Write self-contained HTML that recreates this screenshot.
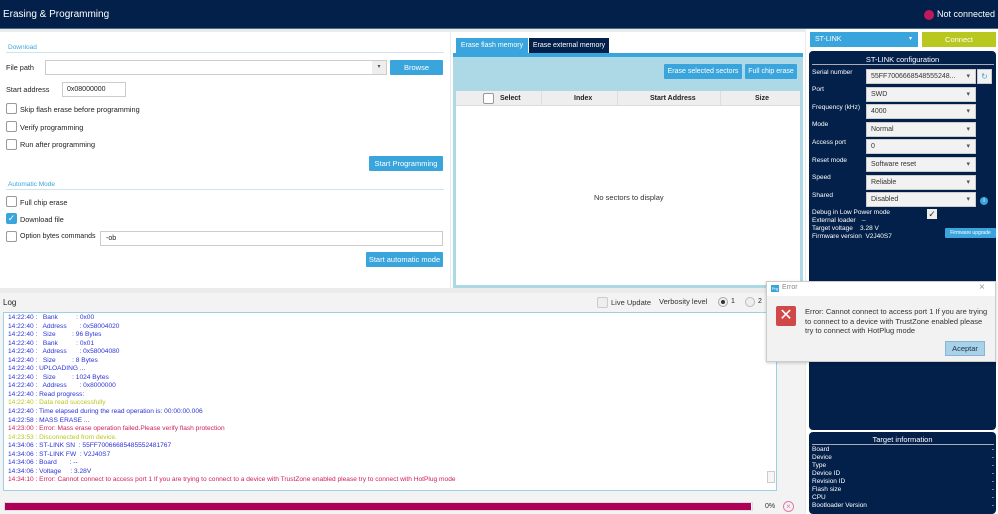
<!DOCTYPE html>
<html><head><meta charset="utf-8"><style>
*{box-sizing:border-box;margin:0;padding:0}
body{width:998px;height:514px;overflow:hidden;background:#ebebeb;font-family:"Liberation Sans",sans-serif;font-size:7.5px;color:#222;position:relative}
.a{position:absolute}
.btn{position:absolute;background:#3aa5dc;color:#fff;text-align:center;font-size:7.5px;line-height:15px;border-radius:1px}
.cb{position:absolute;width:11px;height:11px;border:1px solid #999;background:#fff;border-radius:2px}
.lbl{position:absolute;font-size:7.3px;color:#222}
.sel{position:absolute;left:866px;width:110px;height:15px;background:#f2f2f2;border:1px solid #ccc;font-size:7px;line-height:14px;padding-left:4px;color:#333}
.sel:after{content:"▾";position:absolute;right:5px;top:0;font-size:7px;color:#555;line-height:14px}
.cl{position:absolute;left:812px;color:#fff;font-size:6.5px}
.log div{height:8.55px;line-height:8.55px;white-space:nowrap}
.b{color:#2a33d8}.y{color:#b8c820}.r{color:#d0205a}
.ti div{height:8px;line-height:8px;display:flex;justify-content:space-between}
</style></head><body>
<div class="a" style="left:0;top:0;width:998px;height:29px;background:#02204a;border-bottom:1px solid #4a6a8a"></div>
<div class="a" style="left:3px;top:9px;color:#fff;font-size:10px">Erasing &amp; Programming</div>
<div class="a" style="left:924px;top:10px;width:10px;height:10px;border-radius:50%;background:#c0195c"></div>
<div class="a" style="left:937px;top:9px;color:#fff;font-size:9px">Not connected</div>

<div class="a" style="left:0;top:32px;width:450px;height:256px;background:#fff"></div>
<div class="a" style="left:8px;top:44px;color:#3aa5dc;font-size:6.5px">Download</div>
<div class="a" style="left:6px;top:52px;width:438px;height:1px;background:#cde4ee"></div>
<div class="lbl" style="left:6px;top:63px">File path</div>
<div class="a" style="left:45px;top:60px;width:342px;height:15px;border:1px solid #ccc;background:#fff"></div>
<div class="a" style="left:372px;top:61px;width:14px;height:13px;background:#eee;font-size:6px;text-align:center;line-height:13px;color:#555">▾</div>
<div class="btn" style="left:390px;top:60px;width:53px">Browse</div>
<div class="lbl" style="left:6px;top:85px">Start address</div>
<div class="a" style="left:62px;top:82px;width:64px;height:15px;border:1px solid #ccc;font-size:7px;line-height:13px;padding-left:4px">0x08000000</div>
<div class="cb" style="left:6px;top:103px"></div><div class="lbl" style="left:20px;top:105px">Skip flash erase before programming</div>
<div class="cb" style="left:6px;top:121px"></div><div class="lbl" style="left:20px;top:123px">Verify programming</div>
<div class="cb" style="left:6px;top:139px"></div><div class="lbl" style="left:20px;top:140px">Run after programming</div>
<div class="btn" style="left:369px;top:156px;width:74px">Start Programming</div>
<div class="a" style="left:8px;top:181px;color:#3aa5dc;font-size:6.5px">Automatic Mode</div>
<div class="a" style="left:6px;top:189px;width:438px;height:1px;background:#cde4ee"></div>
<div class="cb" style="left:6px;top:196px"></div><div class="lbl" style="left:20px;top:198px">Full chip erase</div>
<div class="cb" style="left:6px;top:213px;background:#3aa5dc;border-color:#3aa5dc;color:#fff;font-size:9px;line-height:9px;text-align:center">✓</div><div class="lbl" style="left:20px;top:215px">Download file</div>
<div class="cb" style="left:6px;top:231px"></div><div class="lbl" style="left:20px;top:233px;font-size:7px">Option bytes commands</div>
<div class="a" style="left:100px;top:231px;width:343px;height:15px;border:1px solid #ccc;font-size:7px;line-height:13px;padding-left:5px;background:#fff">-ob</div>
<div class="btn" style="left:366px;top:252px;width:77px">Start automatic mode</div>

<div class="a" style="left:451px;top:32px;width:354px;height:256px;background:#fff"></div>
<div class="a" style="left:456px;top:38px;width:72px;height:17px;background:#3aa5dc;color:#fff;font-size:7px;line-height:16px;text-align:center">Erase flash memory</div>
<div class="a" style="left:529px;top:38px;width:80px;height:16px;background:#02204a;color:#fff;font-size:7px;line-height:16px;text-align:center">Erase external memory</div>
<div class="a" style="left:453px;top:53px;width:350px;height:235px;background:#add8e6"></div>
<div class="a" style="left:453px;top:53px;width:350px;height:4px;background:#3aa5dc"></div>
<div class="btn" style="left:664px;top:64px;width:78px;font-size:7px">Erase selected sectors</div>
<div class="btn" style="left:745px;top:64px;width:52px;font-size:7px">Full chip erase</div>
<div class="a" style="left:456px;top:91px;width:344px;height:194px;background:#fff"></div>
<div class="a" style="left:456px;top:91px;width:344px;height:15px;background:#eee;border-bottom:1px solid #ddd;font-weight:bold;font-size:7px;line-height:15px">
<div class="cb" style="left:27px;top:2px"></div>
<span class="a" style="left:44px">Select</span><span class="a" style="left:118px">Index</span><span class="a" style="left:194px">Start Address</span><span class="a" style="left:299px">Size</span>
<span class="a" style="left:85px;top:0;width:1px;height:15px;background:#ddd"></span><span class="a" style="left:161px;top:0;width:1px;height:15px;background:#ddd"></span><span class="a" style="left:264px;top:0;width:1px;height:15px;background:#ddd"></span>
</div>
<div class="a" style="left:594px;top:193px;font-size:7.5px;color:#333">No sectors to display</div>

<div class="a" style="left:806px;top:29px;width:192px;height:485px;background:#fff"></div>
<div class="a" style="left:810px;top:32px;width:108px;height:15px;background:#3aa5dc;color:#fff;font-size:7px;line-height:15px;padding-left:5px">ST-LINK<span class="a" style="right:6px;font-size:6px">▾</span></div>
<div class="a" style="left:922px;top:32px;width:74px;height:15px;background:#b8c81e;color:#fff;font-size:7.5px;line-height:15px;text-align:center">Connect</div>
<div class="a" style="left:809px;top:51px;width:187px;height:379px;background:#02204a;border-radius:4px"></div>
<div class="a" style="left:809px;top:55px;width:187px;text-align:center;color:#fff;font-size:7.5px">ST-LINK configuration</div>
<div class="a" style="left:812px;top:64px;width:182px;height:1px;background:#aab"></div>
<div class="cl" style="top:69px">Serial number</div><div class="sel" style="top:69px;width:110px">55FF70066685485552​48...</div>
<div class="a" style="left:977px;top:69px;width:15px;height:15px;background:#f2f2f2;border:1px solid #ccc;color:#3aa5dc;font-size:8px;text-align:center;line-height:13px">↻</div>
<div class="cl" style="top:86px">Port</div><div class="sel" style="top:87px">SWD</div>
<div class="cl" style="top:104px">Frequency (kHz)</div><div class="sel" style="top:104px">4000</div>
<div class="cl" style="top:121px">Mode</div><div class="sel" style="top:122px">Normal</div>
<div class="cl" style="top:139px">Access port</div><div class="sel" style="top:139px">0</div>
<div class="cl" style="top:157px">Reset mode</div><div class="sel" style="top:157px">Software reset</div>
<div class="cl" style="top:174px">Speed</div><div class="sel" style="top:175px">Reliable</div>
<div class="cl" style="top:192px">Shared</div><div class="sel" style="top:192px">Disabled</div>
<div class="a" style="left:980px;top:197px;width:8px;height:8px;border-radius:50%;background:#3aa5dc;color:#fff;font-size:6px;text-align:center;line-height:8px">i</div>
<div class="cl" style="top:209px">Debug in Low Power mode</div>
<div class="a" style="left:927px;top:209px;width:10px;height:10px;background:#eee;font-size:9px;line-height:10px;text-align:center;color:#333">✓</div>
<div class="cl" style="top:217px">External loader</div><div class="cl" style="left:862px;top:214px">_</div>
<div class="cl" style="top:225px">Target voltage&nbsp;&nbsp;&nbsp;&nbsp;3.28 V</div>
<div class="cl" style="top:233px">Firmware version&nbsp; V2J40S7</div>
<div class="a" style="left:945px;top:228px;width:51px;height:10px;background:#3aa5dc;color:#fff;font-size:5px;line-height:10px;text-align:center;border-radius:1px">Firmware upgrade</div>
<div class="a" style="left:809px;top:432px;width:187px;height:82px;background:#02204a;border-radius:4px"></div>
<div class="a" style="left:809px;top:435px;width:187px;text-align:center;color:#fff;font-size:7.5px">Target information</div>
<div class="a" style="left:812px;top:444px;width:182px;height:1px;background:#aab"></div>
<div class="a ti" style="left:812px;top:446px;width:182px;color:#fff;font-size:6.5px">
<div><span>Board</span><span>-</span></div><div><span>Device</span><span>-</span></div><div><span>Type</span><span>-</span></div><div><span>Device ID</span><span>-</span></div><div><span>Revision ID</span><span>-</span></div><div><span>Flash size</span><span>-</span></div><div><span>CPU</span><span>-</span></div><div><span>Bootloader Version</span><span>-</span></div></div>

<div class="a" style="left:0;top:293px;width:805px;height:221px;background:#f3f3f3"></div>
<div class="a" style="left:3px;top:298px;font-size:8px">Log</div>
<div class="cb" style="left:597px;top:297px;background:#eee;border-color:#ccc"></div>
<div class="a" style="left:611px;top:298px;font-size:7.5px;color:#333">Live Update</div>
<div class="a" style="left:659px;top:297px;font-size:7.5px;color:#333">Verbosity level</div>
<div class="a" style="left:718px;top:297px;width:10px;height:10px;border-radius:50%;border:1px solid #aaa;background:#eee"><div class="a" style="left:2px;top:2px;width:4px;height:4px;border-radius:50%;background:#333"></div></div>
<div class="a" style="left:731px;top:298px;font-size:7px">1</div>
<div class="a" style="left:745px;top:297px;width:10px;height:10px;border-radius:50%;border:1px solid #bbb;background:#eee"></div>
<div class="a" style="left:758px;top:298px;font-size:7px">2</div>
<div class="a" style="left:3px;top:312px;width:774px;height:179px;background:#fff;border:1px solid #9dd0e6"></div>
<div class="a" style="left:767px;top:471px;width:8px;height:12px;border:1px solid #ccc;background:#f6f6f6"></div>
<div class="a log" style="left:8px;top:314px;font-size:6.6px">
<div class="b">14:22:40 :&nbsp;&nbsp; Bank&nbsp;&nbsp;&nbsp;&nbsp;&nbsp;&nbsp;&nbsp;&nbsp;&nbsp; : 0x00</div>
<div class="b">14:22:40 :&nbsp;&nbsp; Address&nbsp;&nbsp;&nbsp;&nbsp;&nbsp;&nbsp; : 0x58004020</div>
<div class="b">14:22:40 :&nbsp;&nbsp; Size&nbsp;&nbsp;&nbsp;&nbsp;&nbsp;&nbsp;&nbsp;&nbsp; : 96 Bytes</div>
<div class="b">14:22:40 :&nbsp;&nbsp; Bank&nbsp;&nbsp;&nbsp;&nbsp;&nbsp;&nbsp;&nbsp;&nbsp;&nbsp; : 0x01</div>
<div class="b">14:22:40 :&nbsp;&nbsp; Address&nbsp;&nbsp;&nbsp;&nbsp;&nbsp;&nbsp; : 0x58004080</div>
<div class="b">14:22:40 :&nbsp;&nbsp; Size&nbsp;&nbsp;&nbsp;&nbsp;&nbsp;&nbsp;&nbsp;&nbsp; : 8 Bytes</div>
<div class="b">14:22:40 : UPLOADING ...</div>
<div class="b">14:22:40 :&nbsp;&nbsp; Size&nbsp;&nbsp;&nbsp;&nbsp;&nbsp;&nbsp;&nbsp;&nbsp; : 1024 Bytes</div>
<div class="b">14:22:40 :&nbsp;&nbsp; Address&nbsp;&nbsp;&nbsp;&nbsp;&nbsp;&nbsp; : 0x8000000</div>
<div class="b">14:22:40 : Read progress:</div>
<div class="y">14:22:40 : Data read successfully</div>
<div class="b">14:22:40 : Time elapsed during the read operation is: 00:00:00.006</div>
<div class="b">14:22:58 : MASS ERASE ...</div>
<div class="r">14:23:00 : Error: Mass erase operation failed.Please verify flash protection</div>
<div class="y">14:23:53 : Disconnected from device.</div>
<div class="b">14:34:06 : ST-LINK SN&nbsp; : 55FF70066685485552481767</div>
<div class="b">14:34:06 : ST-LINK FW&nbsp; : V2J40S7</div>
<div class="b">14:34:06 : Board&nbsp;&nbsp;&nbsp;&nbsp;&nbsp;&nbsp; : --</div>
<div class="b">14:34:06 : Voltage&nbsp;&nbsp;&nbsp;&nbsp; : 3.28V</div>
<div class="r">14:34:10 : Error: Cannot connect to access port 1 If you are trying to connect to a device with TrustZone enabled please try to connect with HotPlug mode</div>
</div>
<div class="a" style="left:4px;top:502px;width:749px;height:9px;background:#fff;border:1px solid #ddd"></div>
<div class="a" style="left:5px;top:503px;width:746px;height:7px;background:#ad0056"></div>
<div class="a" style="left:765px;top:503px;font-size:7px;color:#333">0%</div>
<div class="a" style="left:783px;top:501px;width:11px;height:11px;border-radius:50%;border:1px solid #e07aa8;color:#e07aa8;font-size:8px;text-align:center;line-height:9px">×</div>

<div class="a" style="left:766px;top:281px;width:230px;height:81px;background:#f2f2f2;border:1px solid #ccc;box-shadow:0 1px 3px rgba(0,0,0,.2)"></div>
<div class="a" style="left:767px;top:282px;width:228px;height:14px;background:#fff"></div>
<div class="a" style="left:771px;top:285px;width:8px;height:7px;background:#3aa5dc;color:#fff;font-size:4px;line-height:7px;text-align:center">Prg</div>
<div class="a" style="left:782px;top:284px;font-size:7px;color:#888">Error</div>
<div class="a" style="left:979px;top:282px;font-size:10px;color:#999">×</div>
<div class="a" style="left:776px;top:306px;width:20px;height:20px;background:#d04848;border-radius:2px;color:#fff;font-size:16px;text-align:center;line-height:19px">✕</div>
<div class="a" style="left:805px;top:307px;width:185px;font-size:7.5px;line-height:9.6px;color:#333">Error: Cannot connect to access port 1 If you are trying to connect to a device with TrustZone enabled please try to connect with HotPlug mode</div>
<div class="a" style="left:945px;top:341px;width:40px;height:15px;background:#a8d1ea;border:1px solid #86b6d4;font-size:7.5px;line-height:13px;text-align:center;color:#234">Aceptar</div>
</body></html>
